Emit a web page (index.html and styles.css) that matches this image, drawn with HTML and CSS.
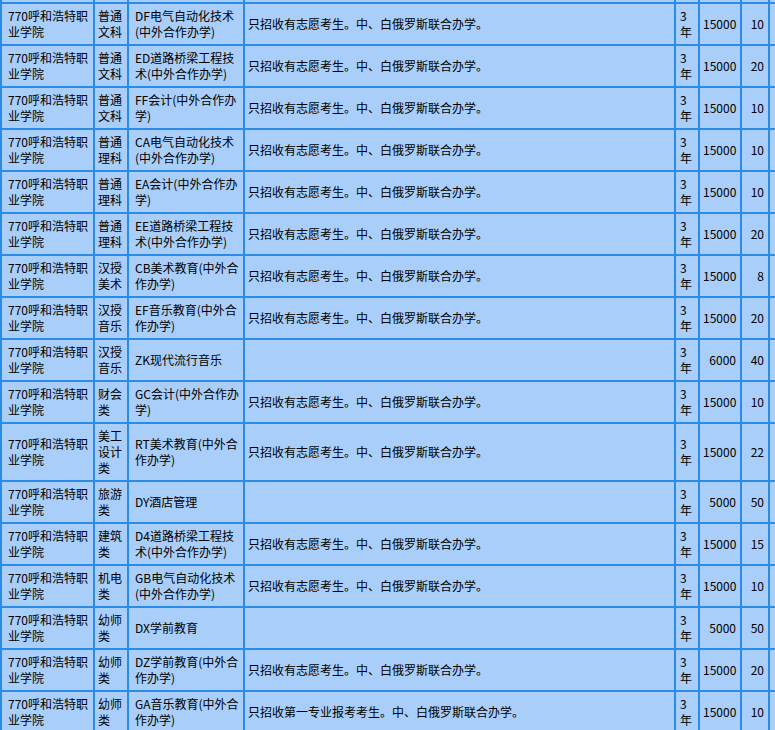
FILE: index.html
```html
<!DOCTYPE html>
<html lang="zh-CN">
<head>
<meta charset="utf-8">
<title>招生计划</title>
<link rel="stylesheet" href="styles.css">
</head>
<body>
<div class="viewport">
<table class="plan">
<colgroup>
<col class="c-school"><col class="c-type"><col class="c-major"><col class="c-note"><col class="c-years"><col class="c-fee"><col class="c-num"><col class="c-extra">
</colgroup>
<tbody>
<tr class="spacer"><td></td><td></td><td></td><td></td><td></td><td></td><td></td><td></td></tr>
<tr><td>770呼和浩特职<br>业学院</td><td>普通<br>文科</td><td>DF电气自动化技术<br>(中外合作办学)</td><td>只招收有志愿考生。中、白俄罗斯联合办学。</td><td>3<br>年</td><td class="r">15000</td><td class="r">10</td><td></td></tr>
<tr><td>770呼和浩特职<br>业学院</td><td>普通<br>文科</td><td>ED道路桥梁工程技<br>术(中外合作办学)</td><td>只招收有志愿考生。中、白俄罗斯联合办学。</td><td>3<br>年</td><td class="r">15000</td><td class="r">20</td><td></td></tr>
<tr><td>770呼和浩特职<br>业学院</td><td>普通<br>文科</td><td>FF会计(中外合作办<br>学)</td><td>只招收有志愿考生。中、白俄罗斯联合办学。</td><td>3<br>年</td><td class="r">15000</td><td class="r">10</td><td></td></tr>
<tr><td>770呼和浩特职<br>业学院</td><td>普通<br>理科</td><td>CA电气自动化技术<br>(中外合作办学)</td><td>只招收有志愿考生。中、白俄罗斯联合办学。</td><td>3<br>年</td><td class="r">15000</td><td class="r">10</td><td></td></tr>
<tr><td>770呼和浩特职<br>业学院</td><td>普通<br>理科</td><td>EA会计(中外合作办<br>学)</td><td>只招收有志愿考生。中、白俄罗斯联合办学。</td><td>3<br>年</td><td class="r">15000</td><td class="r">10</td><td></td></tr>
<tr><td>770呼和浩特职<br>业学院</td><td>普通<br>理科</td><td>EE道路桥梁工程技<br>术(中外合作办学)</td><td>只招收有志愿考生。中、白俄罗斯联合办学。</td><td>3<br>年</td><td class="r">15000</td><td class="r">20</td><td></td></tr>
<tr><td>770呼和浩特职<br>业学院</td><td>汉授<br>美术</td><td>CB美术教育(中外合<br>作办学)</td><td>只招收有志愿考生。中、白俄罗斯联合办学。</td><td>3<br>年</td><td class="r">15000</td><td class="r">8</td><td></td></tr>
<tr><td>770呼和浩特职<br>业学院</td><td>汉授<br>音乐</td><td>EF音乐教育(中外合<br>作办学)</td><td>只招收有志愿考生。中、白俄罗斯联合办学。</td><td>3<br>年</td><td class="r">15000</td><td class="r">20</td><td></td></tr>
<tr><td>770呼和浩特职<br>业学院</td><td>汉授<br>音乐</td><td>ZK现代流行音乐</td><td></td><td>3<br>年</td><td class="r">6000</td><td class="r">40</td><td></td></tr>
<tr><td>770呼和浩特职<br>业学院</td><td>财会<br>类</td><td>GC会计(中外合作办<br>学)</td><td>只招收有志愿考生。中、白俄罗斯联合办学。</td><td>3<br>年</td><td class="r">15000</td><td class="r">10</td><td></td></tr>
<tr><td>770呼和浩特职<br>业学院</td><td>美工<br>设计<br>类</td><td>RT美术教育(中外合<br>作办学)</td><td>只招收有志愿考生。中、白俄罗斯联合办学。</td><td>3<br>年</td><td class="r">15000</td><td class="r">22</td><td></td></tr>
<tr><td>770呼和浩特职<br>业学院</td><td>旅游<br>类</td><td>DY酒店管理</td><td></td><td>3<br>年</td><td class="r">5000</td><td class="r">50</td><td></td></tr>
<tr><td>770呼和浩特职<br>业学院</td><td>建筑<br>类</td><td>D4道路桥梁工程技<br>术(中外合作办学)</td><td>只招收有志愿考生。中、白俄罗斯联合办学。</td><td>3<br>年</td><td class="r">15000</td><td class="r">15</td><td></td></tr>
<tr><td>770呼和浩特职<br>业学院</td><td>机电<br>类</td><td>GB电气自动化技术<br>(中外合作办学)</td><td>只招收有志愿考生。中、白俄罗斯联合办学。</td><td>3<br>年</td><td class="r">15000</td><td class="r">10</td><td></td></tr>
<tr><td>770呼和浩特职<br>业学院</td><td>幼师<br>类</td><td>DX学前教育</td><td></td><td>3<br>年</td><td class="r">5000</td><td class="r">50</td><td></td></tr>
<tr><td>770呼和浩特职<br>业学院</td><td>幼师<br>类</td><td>DZ学前教育(中外合<br>作办学)</td><td>只招收有志愿考生。中、白俄罗斯联合办学。</td><td>3<br>年</td><td class="r">15000</td><td class="r">20</td><td></td></tr>
<tr><td>770呼和浩特职<br>业学院</td><td>幼师<br>类</td><td>GA音乐教育(中外合<br>作办学)</td><td>只招收第一专业报考考生。中、白俄罗斯联合办学。</td><td>3<br>年</td><td class="r">15000</td><td class="r">10</td><td></td></tr>
</tbody>
</table>
</div>
</body>
</html>
```

FILE: styles.css
```css
html, body {
  margin: 0;
  padding: 0;
  background: #a9cef9;
}

.viewport {
  width: 775px;
  height: 730px;
  overflow: hidden;
}

.plan {
  margin-top: -2px;
  table-layout: fixed;
  width: 812px;
  border-collapse: separate;
  border-spacing: 2px;
  background: #2a8be6;
  font-family: "Noto Sans CJK SC", "Noto Sans", sans-serif;
  font-size: 12px;
  line-height: 16px;
  color: #000;
}

.c-school { width: 91px; }
.c-type { width: 32px; }
.c-major { width: 114px; }
.c-note { width: 429px; }
.c-years { width: 22px; }
.c-fee { width: 40px; }
.c-num { width: 26px; }
.c-extra { width: 40px; }

.plan td {
  background: #a9cef9;
  padding: 4px 3px;
  vertical-align: middle;
  text-align: left;
  white-space: nowrap;
  overflow: hidden;
}

.plan td:nth-child(1),
.plan td:nth-child(3) {
  padding-left: 6px;
  padding-right: 0;
}

.plan td:nth-child(5) {
  padding-left: 4px;
  padding-right: 0;
}

.plan td.r {
  text-align: right;
  padding-right: 4px;
}

.plan .spacer td {
  height: 2px;
  padding: 0;
  line-height: 0;
}
```
